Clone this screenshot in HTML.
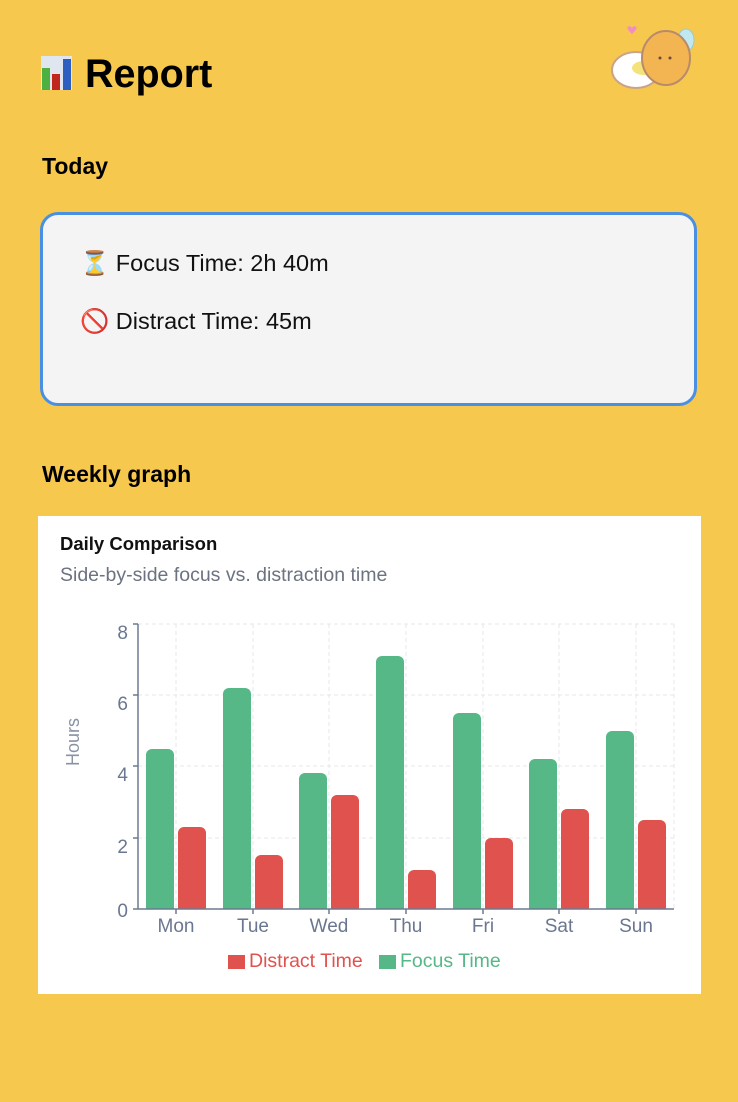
<!DOCTYPE html>
<html><head><meta charset="utf-8"><style>
body{margin:0;width:738px;height:1102px;background:#f6c84e;font-family:"Liberation Sans",sans-serif;position:relative;overflow:hidden}
.a{position:absolute;white-space:nowrap}
</style></head><body>
<svg class="a" style="left:40px;top:54px" width="34" height="38" viewBox="0 0 34 38">
<rect x="1" y="2" width="31" height="34" fill="#dfe6f0"/>
<rect x="2" y="14" width="8" height="22" fill="#4cb140"/>
<rect x="12" y="20" width="8" height="16" fill="#c0281e"/>
<rect x="23" y="5" width="8" height="31" fill="#2d5fc0"/>
</svg>
<div class="a" style="left:85px;top:52px;font-size:39.5px;font-weight:bold;color:#000">Report</div>
<svg class="a" style="left:608px;top:18px" width="92" height="76" viewBox="0 0 92 76">
<ellipse cx="28" cy="52" rx="24" ry="18" fill="#fff" stroke="#c9a48a" stroke-width="2"/>
<ellipse cx="36" cy="50" rx="12" ry="7" fill="#f4e27a"/>
<ellipse cx="78" cy="22" rx="8" ry="11" fill="#bfe8f0" stroke="#9cc" />
<ellipse cx="58" cy="40" rx="24" ry="27" fill="#f3b552" stroke="#b98a6a" stroke-width="2"/>
<circle cx="52" cy="40" r="1.5" fill="#6b4a3a"/><circle cx="62" cy="40" r="1.5" fill="#6b4a3a"/>
<path d="M24 10c2-4 7-1 3 3l-3 3-3-3c-4-4 1-7 3-3z" fill="#f090c0"/>
</svg>
<div class="a" style="left:42px;top:153px;font-size:23px;font-weight:bold">Today</div>
<div class="a" style="left:40px;top:212px;width:651px;height:188px;border:3px solid #4a90e2;border-radius:18px;background:#f4f4f4"></div>
<div class="a" style="left:80px;top:249px;font-size:23.5px;color:#111">⏳ Focus Time: 2h 40m</div>
<div class="a" style="left:80px;top:307px;font-size:23.5px;color:#111">🚫 Distract Time: 45m</div>
<div class="a" style="left:42px;top:461px;font-size:23px;font-weight:bold">Weekly graph</div>
<div class="a" style="left:38px;top:516px;width:663px;height:478px;background:#fff"></div>
<div class="a" style="left:60px;top:533px;font-size:18.5px;font-weight:bold;color:#111">Daily Comparison</div>
<div class="a" style="left:60px;top:564px;font-size:19.5px;color:#6b7280">Side-by-side focus vs. distraction time</div>
<svg class="a" style="left:0;top:0" width="738" height="1102">
<g stroke="#e3e7ee" stroke-dasharray="4 3">
<line x1="138" y1="624" x2="674" y2="624"/><line x1="138" y1="695" x2="674" y2="695"/><line x1="138" y1="766" x2="674" y2="766"/><line x1="138" y1="838" x2="674" y2="838"/>
<line x1="176" y1="624" x2="176" y2="909"/><line x1="253" y1="624" x2="253" y2="909"/><line x1="329" y1="624" x2="329" y2="909"/><line x1="406" y1="624" x2="406" y2="909"/><line x1="483" y1="624" x2="483" y2="909"/><line x1="559" y1="624" x2="559" y2="909"/><line x1="636" y1="624" x2="636" y2="909"/><line x1="674" y1="624" x2="674" y2="909"/>
</g>
<g fill="#55b886">
<path d="M146 909V755a6 6 0 0 1 6-6h16a6 6 0 0 1 6 6V909z"/>
<path d="M223 909V694a6 6 0 0 1 6-6h16a6 6 0 0 1 6 6V909z"/>
<path d="M299 909V779a6 6 0 0 1 6-6h16a6 6 0 0 1 6 6V909z"/>
<path d="M376 909V662a6 6 0 0 1 6-6h16a6 6 0 0 1 6 6V909z"/>
<path d="M453 909V719a6 6 0 0 1 6-6h16a6 6 0 0 1 6 6V909z"/>
<path d="M529 909V765a6 6 0 0 1 6-6h16a6 6 0 0 1 6 6V909z"/>
<path d="M606 909V737a6 6 0 0 1 6-6h16a6 6 0 0 1 6 6V909z"/>
</g>
<g fill="#e0524e">
<path d="M178 909V833a6 6 0 0 1 6-6h16a6 6 0 0 1 6 6V909z"/>
<path d="M255 909V861a6 6 0 0 1 6-6h16a6 6 0 0 1 6 6V909z"/>
<path d="M331 909V801a6 6 0 0 1 6-6h16a6 6 0 0 1 6 6V909z"/>
<path d="M408 909V876a6 6 0 0 1 6-6h16a6 6 0 0 1 6 6V909z"/>
<path d="M485 909V844a6 6 0 0 1 6-6h16a6 6 0 0 1 6 6V909z"/>
<path d="M561 909V815a6 6 0 0 1 6-6h16a6 6 0 0 1 6 6V909z"/>
<path d="M638 909V826a6 6 0 0 1 6-6h16a6 6 0 0 1 6 6V909z"/>
</g>
<g stroke="#6b7a90" stroke-width="1.5">
<line x1="138" y1="624" x2="138" y2="909"/><line x1="133" y1="909" x2="674" y2="909"/>
<line x1="133" y1="624" x2="138" y2="624"/><line x1="133" y1="695" x2="138" y2="695"/><line x1="133" y1="766" x2="138" y2="766"/><line x1="133" y1="838" x2="138" y2="838"/>
<line x1="176" y1="909" x2="176" y2="914"/><line x1="253" y1="909" x2="253" y2="914"/><line x1="329" y1="909" x2="329" y2="914"/><line x1="406" y1="909" x2="406" y2="914"/><line x1="483" y1="909" x2="483" y2="914"/><line x1="559" y1="909" x2="559" y2="914"/><line x1="636" y1="909" x2="636" y2="914"/>
</g>
<g font-family="Liberation Sans" font-size="19" fill="#6b7690" text-anchor="end">
<text x="128" y="639">8</text><text x="128" y="710">6</text><text x="128" y="781">4</text><text x="128" y="853">2</text><text x="128" y="917">0</text>
</g>
<g font-family="Liberation Sans" font-size="19" fill="#6b7690" text-anchor="middle">
<text x="176" y="932">Mon</text><text x="253" y="932">Tue</text><text x="329" y="932">Wed</text><text x="406" y="932">Thu</text><text x="483" y="932">Fri</text><text x="559" y="932">Sat</text><text x="636" y="932">Sun</text>
</g>
<text transform="translate(79 742) rotate(-90)" font-family="Liberation Sans" font-size="18" fill="#8a93a3" text-anchor="middle">Hours</text>
<rect x="228" y="955" width="17" height="14" fill="#e0524e"/>
<text x="249" y="967" font-family="Liberation Sans" font-size="19.5" fill="#e0524e">Distract Time</text>
<rect x="379" y="955" width="17" height="14" fill="#55b886"/>
<text x="400" y="967" font-family="Liberation Sans" font-size="19.5" fill="#55b886">Focus Time</text>
</svg>
</body></html>
